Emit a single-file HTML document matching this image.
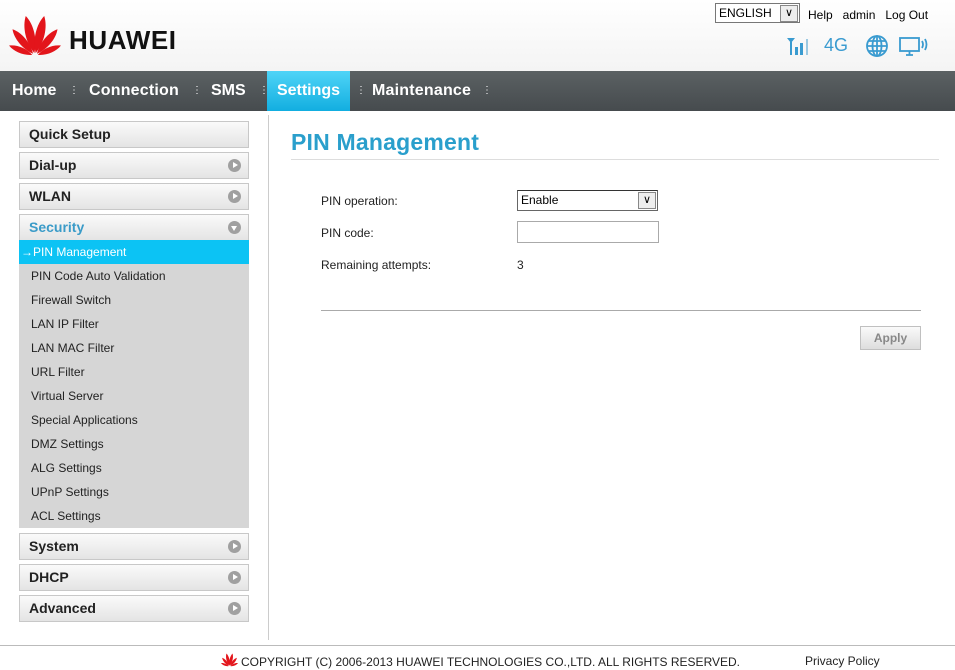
<!DOCTYPE html><html><head><style>
body{margin:0;width:955px;height:670px;position:relative;background:#fff;font-family:"Liberation Sans",Arial,sans-serif;overflow:hidden}
.a{position:absolute}
.nav{left:0;top:71px;width:955px;height:40px;background:linear-gradient(#5b6163,#464b4e)}
.nav span{position:absolute;top:0;height:40px;line-height:40px;color:#fff;font-weight:bold;font-size:16px}
.dot{color:#9aa;font-size:10px!important;font-weight:normal!important}
.mi{position:absolute;left:19px;width:228px;height:25px;border:1px solid #c8c8c8;background:linear-gradient(#fafafa,#e4e4e4);font-weight:bold;font-size:14px;line-height:25px;text-indent:9px;color:#222}
.mi i{position:absolute;right:7px;top:6px;width:13px;height:13px;border-radius:50%;background:#a0a0a0}
.mi i:after{content:"";position:absolute;left:5px;top:3px;border-left:5px solid #fff;border-top:3.5px solid transparent;border-bottom:3.5px solid transparent}
.mi i.d:after{left:3px;top:5px;border-top:5px solid #fff;border-left:3.5px solid transparent;border-right:3.5px solid transparent;border-bottom:0}
.sub{position:absolute;left:19px;width:230px;height:24px;background:#d6d6d6;font-size:12px;line-height:24px;color:#222;text-indent:12px}
.lbl{position:absolute;font-size:12px;color:#222}
</style></head><body>
<div style="position:absolute;left:0;top:0;width:955px;height:71px;background:linear-gradient(#fff,#f4f4f4)"></div>
<svg class="a" style="left:6px;top:12px" width="58" height="45" viewBox="0 0 58 45">
<g fill="#e3151b">
<path transform="translate(29 44) rotate(-13) translate(0 -3)" d="M0 0C-6 -12 -6 -28 0 -38C6 -28 6 -12 0 0Z"/>
<path transform="translate(29 44) rotate(13) translate(0 -3)" d="M0 0C-6 -12 -6 -28 0 -38C6 -28 6 -12 0 0Z"/>
<path transform="translate(29 44) rotate(-40) translate(0 -3)" d="M0 0C-5 -10 -5 -24 0 -32C5 -24 5 -10 0 0Z"/>
<path transform="translate(29 44) rotate(40) translate(0 -3)" d="M0 0C-5 -10 -5 -24 0 -32C5 -24 5 -10 0 0Z"/>
<path transform="translate(29 44) rotate(-68) translate(0 -3)" d="M0 0C-4 -8 -4 -18 0 -25C4 -18 4 -8 0 0Z"/>
<path transform="translate(29 44) rotate(68) translate(0 -3)" d="M0 0C-4 -8 -4 -18 0 -25C4 -18 4 -8 0 0Z"/>
</g></svg>
<div class="a" style="left:69px;top:25px;font-size:26px;font-weight:bold;color:#111;letter-spacing:0.6px">HUAWEI</div>
<div class="a" style="left:715px;top:3px;width:83px;height:18px;border:1px solid #777;background:#fff;font-size:12px;line-height:18px;text-indent:3px">ENGLISH<span class="a" style="right:1px;top:1px;width:16px;height:15px;border:1px solid #888;background:#eee;text-indent:0;text-align:center;line-height:15px;font-size:11px">&#8744;</span></div>
<div class="a" style="left:808px;top:8px;font-size:12px">Help&nbsp;&nbsp; admin&nbsp;&nbsp; Log Out</div>
<svg class="a" style="left:787px;top:38px" width="26" height="17" viewBox="0 0 26 17" fill="#3a9bd0"><path d="M0 0H8L4 5Z"/><rect x="3" y="4" width="2" height="13"/><rect x="8" y="9" width="3" height="8"/><rect x="13" y="5" width="3" height="12"/><rect x="19" y="1" width="2" height="16" fill="#9cc9e2"/></svg>
<div class="a" style="left:824px;top:35px;color:#3a9bd0;font-size:18px">4G</div>
<svg class="a" style="left:865px;top:35px" width="24" height="22" viewBox="0 0 24 22" fill="none" stroke="#3a9bd0" stroke-width="1.8"><circle cx="12" cy="11" r="10"/><ellipse cx="12" cy="11" rx="4.5" ry="10"/><path d="M2 11H22M4 6H20M4 16H20M12 1V21"/></svg>
<svg class="a" style="left:899px;top:37px" width="30" height="20" viewBox="0 0 30 20" fill="none" stroke="#3a9bd0" stroke-width="1.8"><rect x="1" y="1" width="19" height="13"/><path d="M7 18H14M10.5 14V18M23 4Q25 7.5 23 11M26 2Q29 7.5 26 13"/></svg>
<div class="a nav">
<span style="left:12px">Home</span><span class="dot" style="left:69px">⋮</span>
<span style="left:89px;letter-spacing:0.2px">Connection</span><span class="dot" style="left:192px">⋮</span>
<span style="left:211px">SMS</span><span class="dot" style="left:259px">⋮</span>
<span style="left:267px;width:83px;background:linear-gradient(#4fd4f7,#12aee0);text-align:center">Settings</span><span class="dot" style="left:356px">⋮</span>
<span style="left:372px;letter-spacing:0.2px">Maintenance</span><span class="dot" style="left:482px">⋮</span>
</div>
<div class="mi" style="top:121px">Quick Setup</div>
<div class="mi" style="top:152px">Dial-up<i></i></div>
<div class="mi" style="top:183px">WLAN<i></i></div>
<div class="mi" style="top:214px;color:#3a9bc8">Security<i class="d"></i></div>
<div class="sub" style="top:240px;background:#0cc3f4;color:#fff;text-indent:2px">&rarr;PIN Management</div>
<div class="sub" style="top:264px">PIN Code Auto Validation</div>
<div class="sub" style="top:288px">Firewall Switch</div>
<div class="sub" style="top:312px">LAN IP Filter</div>
<div class="sub" style="top:336px">LAN MAC Filter</div>
<div class="sub" style="top:360px">URL Filter</div>
<div class="sub" style="top:384px">Virtual Server</div>
<div class="sub" style="top:408px">Special Applications</div>
<div class="sub" style="top:432px">DMZ Settings</div>
<div class="sub" style="top:456px">ALG Settings</div>
<div class="sub" style="top:480px">UPnP Settings</div>
<div class="sub" style="top:504px">ACL Settings</div>
<div class="mi" style="top:533px">System<i></i></div>
<div class="mi" style="top:564px">DHCP<i></i></div>
<div class="mi" style="top:595px">Advanced<i></i></div>
<div class="a" style="left:268px;top:115px;width:1px;height:525px;background:#ccc"></div>
<div class="a" style="left:291px;top:129px;font-size:23px;font-weight:bold;color:#2a9fcc;letter-spacing:0.2px">PIN Management</div>
<div class="a" style="left:291px;top:159px;width:648px;height:1px;background:#ddd"></div>
<div class="lbl" style="left:321px;top:194px">PIN operation:</div>
<div class="lbl" style="left:321px;top:226px">PIN code:</div>
<div class="lbl" style="left:321px;top:258px">Remaining attempts:</div>
<div class="lbl" style="left:517px;top:258px">3</div>
<div class="a" style="left:517px;top:190px;width:139px;height:19px;border:1px solid #666;border-top-color:#333;font-size:12px;line-height:19px;text-indent:3px;background:#fff">Enable<span class="a" style="right:1px;top:1px;width:16px;height:15px;border:1px solid #888;background:#eee;text-indent:0;text-align:center;line-height:15px;font-size:11px">&#8744;</span></div>
<div class="a" style="left:517px;top:221px;width:140px;height:20px;border:1px solid #aaa;background:#fff"></div>
<div class="a" style="left:321px;top:310px;width:600px;height:1px;background:#aaa"></div>
<div class="a" style="left:860px;top:326px;width:59px;height:22px;border:1px solid #c0c0c0;background:linear-gradient(#fafafa,#ddd);font-size:12px;font-weight:bold;color:#888;text-align:center;line-height:22px">Apply</div>
<div class="a" style="left:0;top:645px;width:955px;height:1px;background:#bbb"></div>
<svg class="a" style="left:220px;top:652px" width="19" height="15" viewBox="0 0 58 45"><g fill="#e3151b">
<path transform="translate(29 44) rotate(-13) translate(0 -3)" d="M0 0C-6 -12 -6 -28 0 -38C6 -28 6 -12 0 0Z"/>
<path transform="translate(29 44) rotate(13) translate(0 -3)" d="M0 0C-6 -12 -6 -28 0 -38C6 -28 6 -12 0 0Z"/>
<path transform="translate(29 44) rotate(-40) translate(0 -3)" d="M0 0C-5 -10 -5 -24 0 -32C5 -24 5 -10 0 0Z"/>
<path transform="translate(29 44) rotate(40) translate(0 -3)" d="M0 0C-5 -10 -5 -24 0 -32C5 -24 5 -10 0 0Z"/>
<path transform="translate(29 44) rotate(-68) translate(0 -3)" d="M0 0C-4 -8 -4 -18 0 -25C4 -18 4 -8 0 0Z"/>
<path transform="translate(29 44) rotate(68) translate(0 -3)" d="M0 0C-4 -8 -4 -18 0 -25C4 -18 4 -8 0 0Z"/>
</g></svg>
<div class="a" style="left:241px;top:655px;font-size:12px;color:#222">COPYRIGHT (C) 2006-2013 HUAWEI TECHNOLOGIES CO.,LTD. ALL RIGHTS RESERVED.</div>
<div class="a" style="left:805px;top:654px;font-size:12px;color:#222">Privacy Policy</div>
</body></html>
